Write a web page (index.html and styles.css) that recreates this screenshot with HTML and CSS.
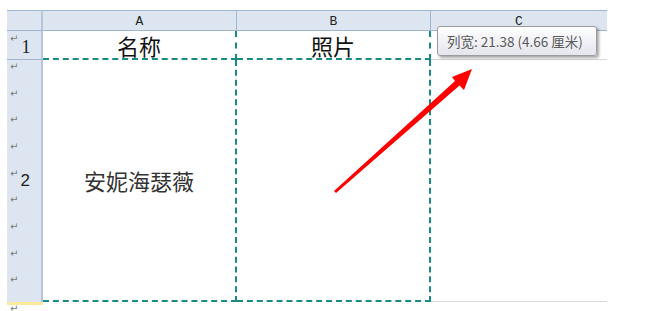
FILE: index.html
```html
<!DOCTYPE html>
<html lang="zh">
<head>
  <meta charset="UTF-8" />
  <title>列宽</title>
  <link rel="stylesheet" href="styles.css">
</head>
<body>
<div class="page">
  <div class="para-top"><span class="mark">↵</span></div>

  <div class="sheet">
    <div class="corner"></div>
    <div class="col-head">A</div>
    <div class="col-head">B</div>
    <div class="col-head last">C</div>

    <div class="row-head first"><span class="mark">↵</span><span class="num">1</span></div>
    <div class="cell title sel">名称</div>
    <div class="cell title sel">照片</div>
    <div class="cell plain"></div>

    <div class="row-head tall">
      <div class="line"><span class="mark">↵</span></div>
      <div class="line"><span class="mark">↵</span></div>
      <div class="line"><span class="mark">↵</span></div>
      <div class="line"><span class="mark">↵</span></div>
      <div class="line"><span class="mark">↵</span><span class="num two">2</span></div>
      <div class="line"><span class="mark">↵</span></div>
      <div class="line"><span class="mark">↵</span></div>
      <div class="line"><span class="mark">↵</span></div>
      <div class="line"><span class="mark">↵</span></div>
    </div>
    <div class="cell name sel">安妮海瑟薇</div>
    <div class="cell sel"></div>
    <div class="cell plain"></div>
  </div>

  <div class="sheet-foot">
    <div class="yellow"></div>
    <span class="mark">↵</span>
  </div>

  <div class="tip">列宽: 21.38 (4.66 厘米)</div>

  <svg class="arrow" width="670" height="311" viewBox="0 0 670 311">
    <polygon fill="#ff0000" points="472,69 464,90 459.5,85.5 336,193 334,191 455,81 452,77"/>
  </svg>
</div>
</body>
</html>
```

FILE: styles.css
```css
* {
  box-sizing: border-box;
}

body {
  margin: 0;
  background: #fff;
  font-family: "Noto Sans CJK SC", "Liberation Sans", sans-serif;
}

.page {
  position: relative;
  width: 670px;
  height: 311px;
  padding-left: 7px;
  overflow: hidden;
}

.mark {
  font-family: "DejaVu Sans", sans-serif;
  font-size: 10px;
  line-height: 9px;
  color: #7a7a7a;
}

.para-top {
  height: 10px;
  padding-left: 3px;
}

.sheet {
  display: grid;
  grid-template-columns: 36px 194px 194px 176px;
  grid-template-rows: 21px 29px 242px;
}

.corner,
.col-head {
  background: #dde5f0;
  border-top: 1px solid #9fb6d2;
  border-bottom: 1px solid #9fb6d2;
}

.corner {
  border-right: 2px solid #b3c6dd;
}

.col-head {
  border-right: 1px solid #9fb6d2;
  font-family: "Liberation Mono", monospace;
  font-size: 13px;
  color: #222;
  display: flex;
  justify-content: center;
  align-items: flex-end;
  padding-bottom: 1px;
}

.col-head.last {
  border-right: none;
}

.row-head {
  background: #dde5f0;
  border-right: 2px solid #b3c6dd;
  border-bottom: 1px solid #9fb6d2;
}

.row-head.first {
  display: flex;
  align-items: flex-start;
  padding: 3px 0 0 3px;
}

.num {
  font-family: "Liberation Serif", serif;
  font-size: 18px;
  color: #222;
  margin: 3px 0 0 3px;
}

.num.two {
  font-family: "Liberation Sans", sans-serif;
  font-size: 17px;
  margin: 2px 0 0 2px;
}

.row-head.tall {
  display: flex;
  flex-direction: column;
  padding-top: 2px;
  border-bottom: none;
}

.line {
  height: 26.8px;
  display: flex;
  align-items: flex-start;
  padding-left: 3px;
}

.cell {
  display: flex;
  justify-content: center;
  align-items: center;
}

.cell.sel {
  border-right: 2px dashed #1a8a83;
  border-bottom: 2px dashed #1a8a83;
}

.cell.plain {
  border-bottom: 1px solid #d8d8d8;
}

.title {
  font-size: 22px;
  color: #111;
  padding-top: 1px;
}

.name {
  font-size: 22px;
  color: #333;
}

.sheet-foot .yellow {
  width: 36px;
  height: 3px;
  background: #fce99b;
}

.sheet-foot .mark {
  display: block;
  padding-left: 3px;
  line-height: 7px;
}

.tip {
  position: absolute;
  left: 437px;
  top: 26px;
  width: 160px;
  height: 30px;
  border: 1px solid #9c9c9c;
  border-radius: 3px;
  background: linear-gradient(#ffffff, #e4e5ee);
  box-shadow: 2px 2px 3px rgba(0, 0, 0, 0.35);
  font-size: 13.5px;
  color: #5a5a5a;
  display: flex;
  align-items: center;
  padding-left: 9px;
  white-space: nowrap;
}

.arrow {
  position: absolute;
  left: 0;
  top: 0;
}
```
